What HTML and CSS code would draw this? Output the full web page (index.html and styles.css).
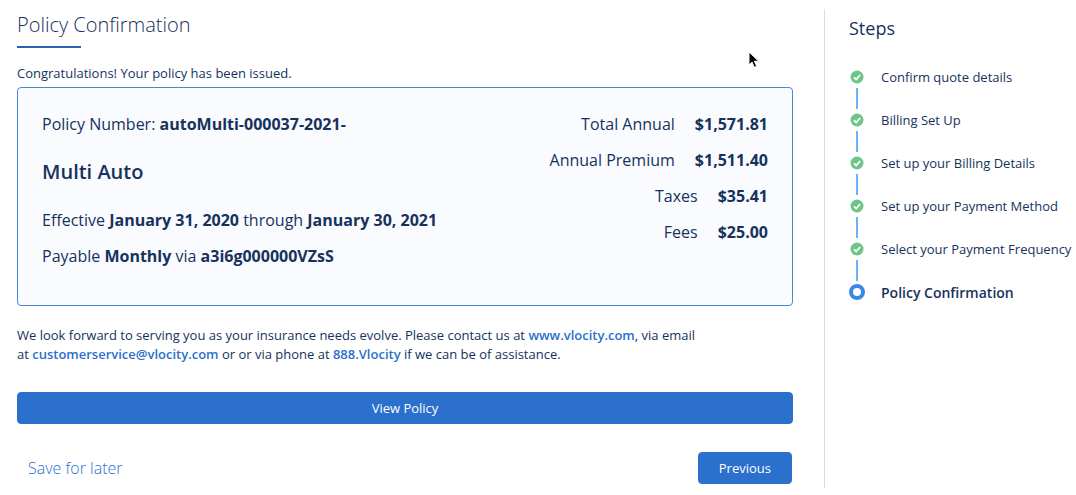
FILE: index.html
```
<!DOCTYPE html>
<html lang="en">
<head>
  <meta charset="UTF-8">
  <meta name="viewport" content="width=device-width, initial-scale=1.0">
  <title>Policy Confirmation</title>
  <link rel="stylesheet" href="styles.css">
</head>
<body>
  <div class="page">
    <main class="content">
      <h1>Policy Confirmation</h1>
      <p class="intro">Congratulations! Your policy has been issued.</p>

      <section class="policy-card">
        <div class="policy-info">
          <p>Policy Number: <strong>autoMulti-000037-2021-</strong></p>
          <h2>Multi Auto</h2>
          <p>Effective <strong>January 31, 2020</strong> through <strong>January 30, 2021</strong></p>
          <p>Payable <strong>Monthly</strong> via <strong>a3i6g000000VZsS</strong></p>
        </div>
        <dl class="prices">
          <div><dt>Total Annual</dt><dd>$1,571.81</dd></div>
          <div><dt>Annual Premium</dt><dd>$1,511.40</dd></div>
          <div><dt>Taxes</dt><dd>$35.41</dd></div>
          <div><dt>Fees</dt><dd>$25.00</dd></div>
        </dl>
      </section>

      <p class="contact">
        We look forward to serving you as your insurance needs evolve. Please contact us at <a href="#">www.vlocity.com</a>, via email<br>
        at <a href="#">customerservice@vlocity.com</a> or or via phone at <a href="#">888.Vlocity</a> if we can be of assistance.
      </p>

      <button class="btn btn-block" type="button">View Policy</button>

      <div class="actions">
        <a class="save-link" href="#">Save for later</a>
        <button class="btn" type="button">Previous</button>
      </div>

      <svg class="cursor" width="12" height="18" viewBox="0 0 12 18" aria-hidden="true">
        <path d="M1 1v13l3-3 2.300 5.300 2.400-1-2.300-5.100h4.300z" fill="#000" stroke="#fff" stroke-width="1"/>
      </svg>
    </main>

    <aside class="sidebar">
      <h2>Steps</h2>
      <svg class="symbols" aria-hidden="true">
        <symbol id="check" viewBox="0 0 14 14">
          <circle cx="7" cy="7" r="6.500" fill="#6cc687"/>
          <path d="M4 7.300l2.200 2.100 4-4.400" fill="none" stroke="#fff" stroke-width="1.800"/>
        </symbol>
      </svg>
      <ol class="steps">
        <li><svg class="icon"><use href="#check"/></svg>Confirm quote details</li>
        <li><svg class="icon"><use href="#check"/></svg>Billing Set Up</li>
        <li><svg class="icon"><use href="#check"/></svg>Set up your Billing Details</li>
        <li><svg class="icon"><use href="#check"/></svg>Set up your Payment Method</li>
        <li><svg class="icon"><use href="#check"/></svg>Select your Payment Frequency</li>
        <li class="current"><span class="ring"></span>Policy Confirmation</li>
      </ol>
    </aside>
  </div>
</body>
</html>
```
FILE: styles.css
```
* {
  box-sizing: border-box;
}

body {
  margin: 0;
  background: #fff;
  color: #16325c;
  font-family: "Open Sans", "Noto Sans", sans-serif;
  font-size: 13px;
  line-height: 19px;
}

h1, h2, p, dl, dd, ol {
  margin: 0;
  padding: 0;
}

a {
  color: #2a70cc;
  text-decoration: none;
}

.page {
  display: flex;
  padding: 9px 0 8px 17px;
}

.content {
  position: relative;
  flex: 1;
  min-width: 0;
  margin-right: 31px;
}

h1 {
  font-size: 20px;
  font-weight: 300;
  line-height: 32px;
}

h1::after {
  content: "";
  display: block;
  width: 64px;
  height: 2px;
  margin-top: 5px;
  background: #2f5fb3;
}

.intro {
  margin: 16px 0 4px;
}

.policy-card {
  display: flex;
  justify-content: space-between;
  padding: 24px 24px 25px;
  border: 1px solid #4a88d4;
  border-radius: 4px;
  background: #fafbff;
  font-size: 16px;
  line-height: 24px;
}

.policy-info p,
.prices div {
  margin-bottom: 12px;
}

.policy-card h2 {
  margin: 24px 0;
  font-size: 20px;
  font-weight: 600;
  line-height: 24px;
}

.policy-card strong,
.prices dd {
  font-weight: 700;
}

.prices div {
  display: flex;
  justify-content: flex-end;
  gap: 20px;
}

.contact {
  margin: 20px 0 28px;
}

.contact a {
  font-weight: 600;
}

.btn {
  height: 32px;
  padding: 0 20px;
  border: 1px solid #2a70cc;
  border-radius: 4px;
  background: #2a70cc;
  color: #fff;
  font: inherit;
  cursor: pointer;
}

.btn-block {
  display: block;
  width: 100%;
}

.actions {
  display: flex;
  align-items: center;
  justify-content: space-between;
  margin-top: 28px;
  padding: 0 1px 4px 11px;
}

.save-link {
  font-size: 16px;
  font-weight: 300;
}

.cursor {
  position: absolute;
  top: 42px;
  right: 33px;
}

.sidebar {
  flex: 0 0 252px;
  padding-left: 24px;
  border-left: 1px solid #d8dde6;
}

.sidebar h2 {
  font-size: 18px;
  font-weight: 400;
  line-height: 38px;
}

.symbols {
  display: none;
}

.steps {
  margin-top: 20px;
  list-style: none;
}

.steps li {
  position: relative;
  display: flex;
  align-items: center;
  gap: 16px;
  height: 20px;
  margin-bottom: 23px;
  white-space: nowrap;
}

/* connector between two step markers */
.steps li:not(:last-child)::after {
  content: "";
  position: absolute;
  top: 21px;
  left: 7px;
  width: 2px;
  height: 21px;
  background: #6cb1fa;
}

.icon {
  width: 14px;
  height: 14px;
  margin: 0 1px;
}

.ring {
  width: 16px;
  height: 16px;
  border: 4px solid #3a87e8;
  border-radius: 50%;
}

.steps .current {
  font-size: 14px;
  font-weight: 600;
}
```
